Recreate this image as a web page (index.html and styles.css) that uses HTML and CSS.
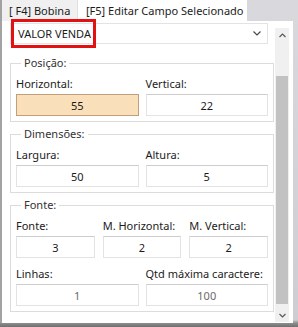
FILE: index.html
```html
<!DOCTYPE html>
<html lang="pt">
<head>
    <meta charset="UTF-8">
    <title>Editar Campo</title>
    <link rel="stylesheet" href="styles.css">
</head>
<body>
    <div class="window">
        <div class="tabs">
            <div class="tab">[ F4] Bobina</div>
            <div class="tab active">[F5] Editar Campo Selecionado</div>
        </div>
        <div class="panel">
            <div class="content">
                <div class="combo">
                    <span>VALOR VENDA</span>
                    <svg width="8" height="5" viewBox="0 0 8 5"><polyline points="0.5,0.5 4,4 7.5,0.5" fill="none" stroke="#444" stroke-width="1.1"/></svg>
                </div>
                <fieldset class="group">
                    <legend>Posição:</legend>
                    <div class="row">
                        <label class="field"><span>Horizontal:</span><input type="text" class="hot" value="55"></label>
                        <label class="field"><span>Vertical:</span><input type="text" value="22"></label>
                    </div>
                </fieldset>
                <fieldset class="group">
                    <legend>Dimensões:</legend>
                    <div class="row">
                        <label class="field"><span>Largura:</span><input type="text" value="50"></label>
                        <label class="field"><span>Altura:</span><input type="text" value="5"></label>
                    </div>
                </fieldset>
                <fieldset class="group">
                    <legend>Fonte:</legend>
                    <div class="row three">
                        <label class="field"><span>Fonte:</span><input type="text" value="3"></label>
                        <label class="field"><span>M. Horizontal:</span><input type="text" value="2"></label>
                        <label class="field"><span>M. Vertical:</span><input type="text" value="2"></label>
                    </div>
                    <div class="row">
                        <label class="field"><span>Linhas:</span><input type="text" class="off" value="1" readonly></label>
                        <label class="field"><span>Qtd máxima caractere:</span><input type="text" class="off" value="100" readonly></label>
                    </div>
                </fieldset>
            </div>
            <div class="scrollbar">
                <div class="sb-btn">
                    <svg width="7" height="5" viewBox="0 0 7 5"><polyline points="0.5,4 3.5,1 6.5,4" fill="none" stroke="#555" stroke-width="1.1"/></svg>
                </div>
                <div class="sb-thumb"></div>
                <div class="sb-btn down">
                    <svg width="7" height="5" viewBox="0 0 7 5"><polyline points="0.5,1 3.5,4 6.5,1" fill="none" stroke="#555" stroke-width="1.1"/></svg>
                </div>
            </div>
        </div>
        <div class="mark"></div>
    </div>
</body>
</html>
```

FILE: styles.css
```css
* { box-sizing: border-box; }
body {
    margin: 0;
    width: 298px;
    height: 327px;
    overflow: hidden;
    background: linear-gradient(to bottom, #d9d9dd 0, #cdcdd2 320px, #8e8e8e 323px, #6f6f6f 327px);
    font: 11px "Noto Sans", sans-serif;
    color: #1b1b1b;
}
.window {
    position: relative;
    width: 293px;
    border-left: 2px solid #a2a2a2;
}
.tabs {
    display: flex;
    height: 21px;
}
.tab {
    width: 76px;
    padding-left: 7px;
    line-height: 21px;
    background: #f0f0f0;
    border-right: 1px solid #e0e0e0;
    white-space: nowrap;
}
.tab.active {
    width: 169px;
    padding-left: 8px;
    background: #fff;
    border-right: none;
}
.panel {
    display: flex;
    height: 302px;
    background: #fff;
}
.content {
    flex: 1;
    padding: 2px 1px 0 8px;
}
.combo {
    width: 258px;
    height: 21px;
    border: 1px solid #e3e3e3;
    display: flex;
    align-items: center;
    justify-content: space-between;
    padding: 0 6px 0 7px;
}
.group {
    margin: 5px 0 0;
    padding: 0 5px 5px;
    border: 1px solid #dcdcdc;
    min-width: 0;
}
.combo + .group { margin-top: 12px; }
legend {
    margin-left: 5px;
    padding: 0 3px;
    line-height: 14px;
    color: #333;
}
.row {
    display: grid;
    grid-template-columns: 1fr 1fr;
    column-gap: 7px;
    margin-top: 6px;
}
.row.three {
    grid-template-columns: 1fr 1fr 1fr;
    column-gap: 8px;
}
.row + .row { margin-top: 8px; }
.field span {
    display: block;
    line-height: 16px;
    margin-bottom: 2px;
    white-space: nowrap;
}
.field input {
    display: block;
    width: 100%;
    height: 22px;
    margin: 0;
    padding: 0;
    border: 1px solid;
    border-color: #cdcdcd #e3e3e3 #e3e3e3 #e3e3e3;
    background: #fff;
    font: inherit;
    color: inherit;
    text-align: center;
    outline: none;
}
.field input.hot {
    background: #fae0ba;
    border-color: #c29f7c;
}
.field input.off { color: #6a6a6a; }
.scrollbar {
    width: 14px;
    margin: 7px 4px 1px 0;
    background: #f0f0f0;
    display: flex;
    flex-direction: column;
}
.sb-btn {
    height: 14px;
    display: flex;
    align-items: center;
    justify-content: center;
}
.sb-btn.down { margin-top: auto; }
.sb-thumb {
    height: 228px;
    margin: 34px 1px 0;
    background: #c2c2c2;
}
.mark {
    position: absolute;
    left: 9px;
    top: 19px;
    width: 85px;
    height: 29px;
    border: 3px solid #e31212;
}
```
